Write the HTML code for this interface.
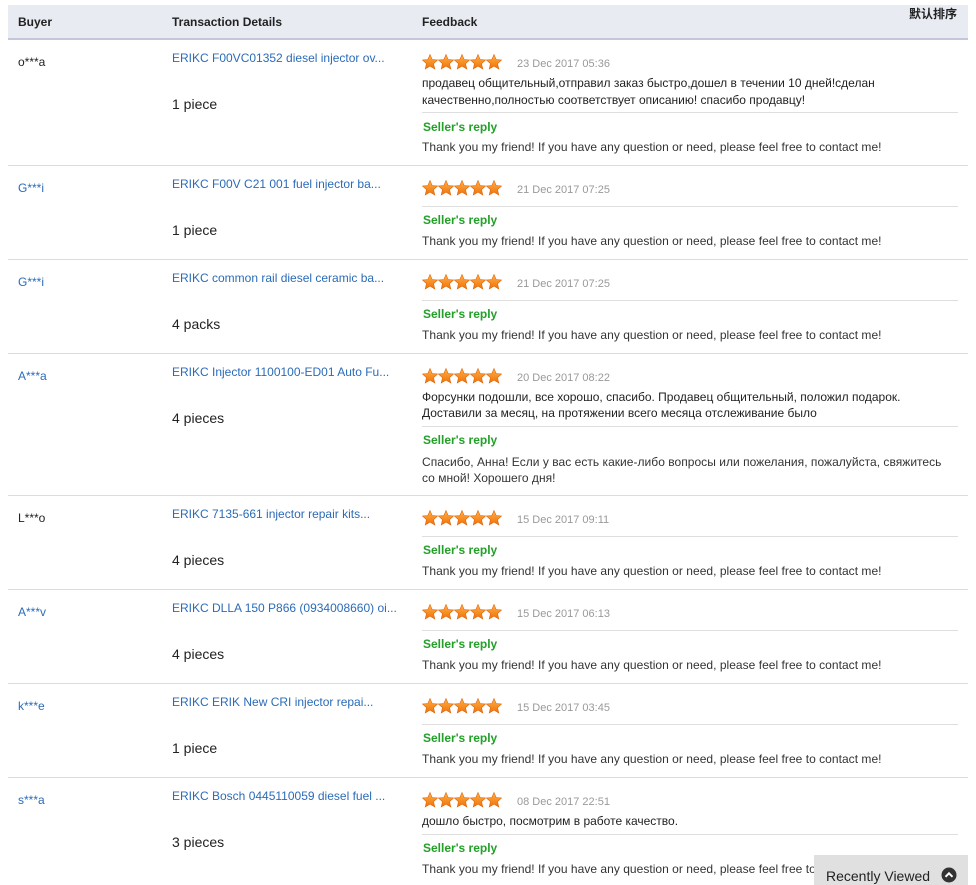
<!DOCTYPE html>
<html><head><meta charset="utf-8"><style>
body{margin:0;width:976px;height:881px;background:#fff;position:relative;overflow:hidden;font-family:Arial,"Liberation Sans","Noto Sans CJK SC",sans-serif;}
.a{position:absolute;white-space:nowrap;line-height:16px;margin-top:1px}
.hd{position:absolute;left:8px;top:5px;width:960px;height:33px;background:#e9ebf3;border-bottom:2px solid #c4c7d9;}
.h{font-size:12px;font-weight:bold;color:#222;top:13px}
.line{position:absolute;left:8px;width:960px;height:1px;background:#dcdcdc}
.dv{position:absolute;left:422px;width:536px;height:1px;background:#dedede}
.b{font-size:12px;left:18px}
.blue{color:#2b6bb8}
.t{font-size:12px;left:172px;color:#2b6bb8}
.q{font-size:14px;left:172px;color:#222}
.st{position:absolute;left:422px;width:80px;height:16px}
.d{font-size:11px;color:#999;left:517px}
.c{font-size:12px;color:#222;left:422px}
.r{font-size:12px;font-weight:bold;color:#22a028;left:423px}
.k{font-size:12px;color:#333;left:422px;letter-spacing:0.03px}
</style></head><body>
<svg width="0" height="0" style="position:absolute"><defs>
<linearGradient id="g" x1="0" y1="0" x2="0" y2="1"><stop offset="0" stop-color="#ffb347"/><stop offset="1" stop-color="#f0700a"/></linearGradient>
<g id="s"><polygon points="8,0.5 10.2,5.6 15.6,6 11.5,9.6 12.8,15 8,12.1 3.2,15 4.5,9.6 0.4,6 5.8,5.6" fill="url(#g)" stroke="#e0650a" stroke-width="0.6"/></g>
<g id="five"><use href="#s"/><use href="#s" x="16"/><use href="#s" x="32"/><use href="#s" x="48"/><use href="#s" x="64"/></g>
</defs></svg>
<div class="hd"></div>
<div class="a h" style="left:18px">Buyer</div>
<div class="a h" style="left:172px">Transaction Details</div>
<div class="a h" style="left:422px">Feedback</div>
<div class="a h" style="left:909px;top:5px">默认排序</div>

<div class="a b" style="top:53px;color:#222">o***a</div>
<div class="a t" style="top:49px">ERIKC F00VC01352 diesel injector ov...</div>
<div class="a q" style="top:95px">1 piece</div>
<svg class="st" style="top:54px"><use href="#five"/></svg>
<div class="a d" style="top:55px">23 Dec 2017 05:36</div>
<div class="a c" style="top:74px">продавец общительный,отправил заказ быстро,дошел в течении 10 дней!сделан</div>
<div class="a c" style="top:91px">качественно,полностью соответствует описанию! спасибо продавцу!</div>
<div class="dv" style="top:112px"></div>
<div class="a r" style="top:118px">Seller's reply</div>
<div class="a k" style="top:138px">Thank you my friend! If you have any question or need, please feel free to contact me!</div>
<div class="line" style="top:165px"></div>

<div class="a b blue" style="top:179px">G***i</div>
<div class="a t" style="top:175px">ERIKC F00V C21 001 fuel injector ba...</div>
<div class="a q" style="top:221px">1 piece</div>
<svg class="st" style="top:180px"><use href="#five"/></svg>
<div class="a d" style="top:181px">21 Dec 2017 07:25</div>
<div class="dv" style="top:206px"></div>
<div class="a r" style="top:211px">Seller's reply</div>
<div class="a k" style="top:232px">Thank you my friend! If you have any question or need, please feel free to contact me!</div>
<div class="line" style="top:259px"></div>

<div class="a b blue" style="top:273px">G***i</div>
<div class="a t" style="top:269px">ERIKC common rail diesel ceramic ba...</div>
<div class="a q" style="top:315px">4 packs</div>
<svg class="st" style="top:274px"><use href="#five"/></svg>
<div class="a d" style="top:275px">21 Dec 2017 07:25</div>
<div class="dv" style="top:300px"></div>
<div class="a r" style="top:305px">Seller's reply</div>
<div class="a k" style="top:326px">Thank you my friend! If you have any question or need, please feel free to contact me!</div>
<div class="line" style="top:353px"></div>

<div class="a b blue" style="top:367px">A***a</div>
<div class="a t" style="top:363px">ERIKC Injector 1100100-ED01 Auto Fu...</div>
<div class="a q" style="top:409px">4 pieces</div>
<svg class="st" style="top:368px"><use href="#five"/></svg>
<div class="a d" style="top:369px">20 Dec 2017 08:22</div>
<div class="a c" style="top:388px">Форсунки подошли, все хорошо, спасибо. Продавец общительный, положил подарок.</div>
<div class="a c" style="top:404px">Доставили за месяц, на протяжении всего месяца отслеживание было</div>
<div class="dv" style="top:426px"></div>
<div class="a r" style="top:431px">Seller's reply</div>
<div class="a k" style="top:453px">Спасибо, Анна! Если у вас есть какие-либо вопросы или пожелания, пожалуйста, свяжитесь</div>
<div class="a k" style="top:469px">со мной! Хорошего дня!</div>
<div class="line" style="top:495px"></div>

<div class="a b" style="top:509px;color:#222">L***o</div>
<div class="a t" style="top:505px">ERIKC 7135-661 injector repair kits...</div>
<div class="a q" style="top:551px">4 pieces</div>
<svg class="st" style="top:510px"><use href="#five"/></svg>
<div class="a d" style="top:511px">15 Dec 2017 09:11</div>
<div class="dv" style="top:536px"></div>
<div class="a r" style="top:541px">Seller's reply</div>
<div class="a k" style="top:562px">Thank you my friend! If you have any question or need, please feel free to contact me!</div>
<div class="line" style="top:589px"></div>

<div class="a b blue" style="top:603px">A***v</div>
<div class="a t" style="top:599px">ERIKC DLLA 150 P866 (0934008660) oi...</div>
<div class="a q" style="top:645px">4 pieces</div>
<svg class="st" style="top:604px"><use href="#five"/></svg>
<div class="a d" style="top:605px">15 Dec 2017 06:13</div>
<div class="dv" style="top:630px"></div>
<div class="a r" style="top:635px">Seller's reply</div>
<div class="a k" style="top:656px">Thank you my friend! If you have any question or need, please feel free to contact me!</div>
<div class="line" style="top:683px"></div>

<div class="a b blue" style="top:697px">k***e</div>
<div class="a t" style="top:693px">ERIKC ERIK New CRI injector repai...</div>
<div class="a q" style="top:739px">1 piece</div>
<svg class="st" style="top:698px"><use href="#five"/></svg>
<div class="a d" style="top:699px">15 Dec 2017 03:45</div>
<div class="dv" style="top:724px"></div>
<div class="a r" style="top:729px">Seller's reply</div>
<div class="a k" style="top:750px">Thank you my friend! If you have any question or need, please feel free to contact me!</div>
<div class="line" style="top:777px"></div>

<div class="a b blue" style="top:791px">s***a</div>
<div class="a t" style="top:787px">ERIKC Bosch 0445110059 diesel fuel ...</div>
<div class="a q" style="top:833px">3 pieces</div>
<svg class="st" style="top:792px"><use href="#five"/></svg>
<div class="a d" style="top:793px">08 Dec 2017 22:51</div>
<div class="a c" style="top:812px">дошло быстро, посмотрим в работе качество.</div>
<div class="dv" style="top:834px"></div>
<div class="a r" style="top:839px">Seller's reply</div>
<div class="a k" style="top:860px">Thank you my friend! If you have any question or need, please feel free to contact me!</div>

<div style="position:absolute;left:814px;top:855px;width:154px;height:30px;background:#e0e0e0"></div>
<div class="a" style="left:826px;top:866px;font-size:14px;line-height:18px;color:#222">Recently Viewed</div>
<svg style="position:absolute;left:941px;top:867px" width="16" height="16"><circle cx="8" cy="8" r="7.5" fill="#333"/><path d="M4.5 9.8 L8 6.3 L11.5 9.8" stroke="#fff" stroke-width="2" fill="none"/></svg>
</body></html>
